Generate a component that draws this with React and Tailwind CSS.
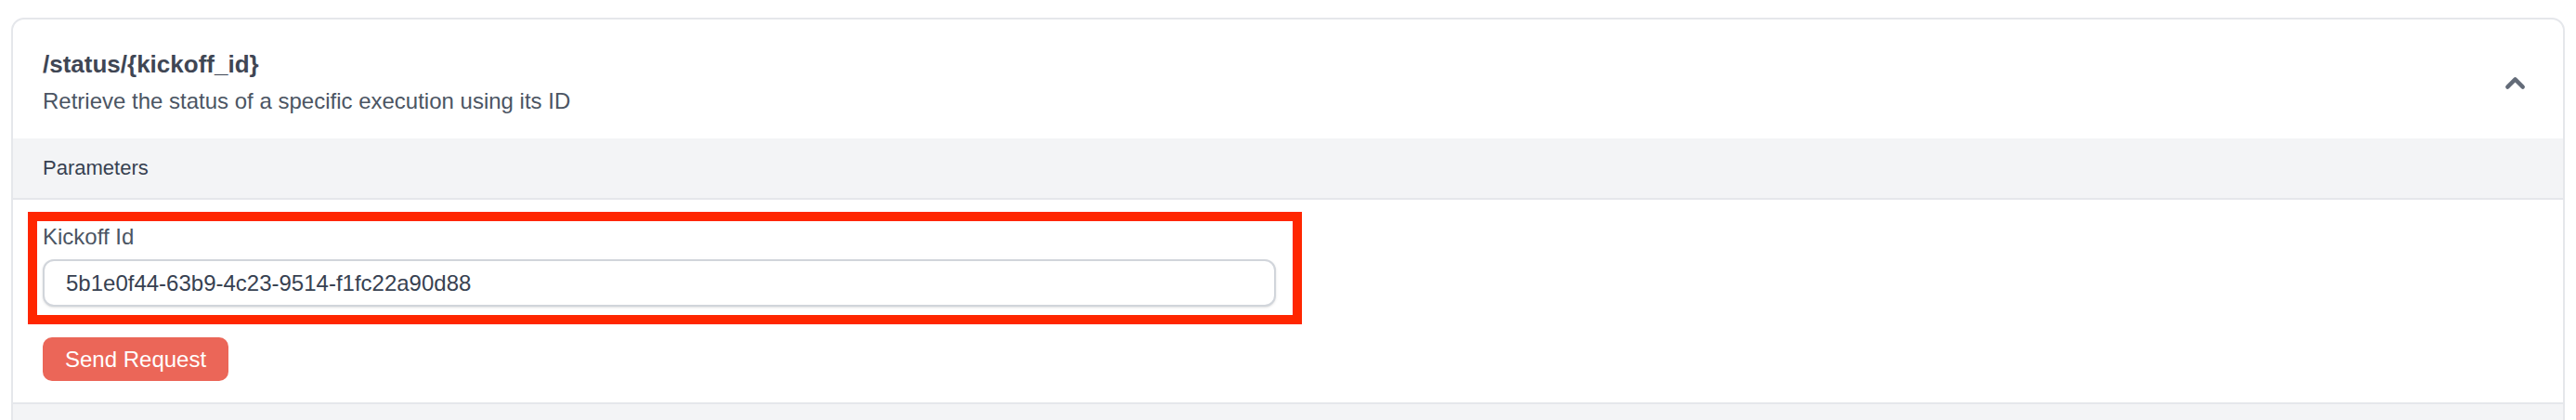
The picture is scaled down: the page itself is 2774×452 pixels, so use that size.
import React, { useState } from 'react';
import { ChevronUp } from 'lucide-react';

const font = { fontFamily: '"Liberation Sans", Arial, sans-serif' };

const App = () => {
  const [kickoffId, setKickoffId] = useState('5b1e0f44-63b9-4c23-9514-f1fc22a90d88');
  const [isOpen, setIsOpen] = useState(true);

  return (
    <div className="min-h-screen bg-white pl-[12px] pr-[12px] pt-[19px]" style={font}>
      <div className="rounded-[14px] border-2 border-[#e5e7eb] bg-white">
        {/* Endpoint header */}
        <button
          onClick={() => setIsOpen(!isOpen)}
          className="flex w-full items-center justify-between pl-[32px] pr-[35px] pt-[28px] pb-[20px] text-left"
        >
          <div>
            <h3 className="text-[26px] leading-[40px] font-bold text-[#3f4654]">/status/{'{kickoff_id}'}</h3>
            <p className="text-[24px] leading-[40px] text-[#4b5563]">Retrieve the status of a specific execution using its ID</p>
          </div>
          <ChevronUp size={33} strokeWidth={3.1} className="text-[#636b78]" />
        </button>

        {/* Parameters band */}
        <div className="h-[66px] border-b-2 border-[#e5e7eb] bg-[#f3f4f6] pl-[32px]">
          <p className="text-[22px] leading-[64px] text-[#374151]">Parameters</p>
        </div>

        <div className="px-[32px] pt-[24px] pb-[23px]">
          <div className="relative w-[1328px]">
            <label className="block text-[24px] leading-[32px] text-[#4b5563]">Kickoff Id</label>
            <input
              value={kickoffId}
              onChange={(e) => setKickoffId(e.target.value)}
              className="mt-[8px] block h-[51px] w-full rounded-[12px] border-2 border-[#d1d5db] bg-white pl-[23px] pr-4 text-[24px] text-[#374151] shadow-sm outline-none"
              style={font}
            />
            {/* highlight annotation */}
            <span className="pointer-events-none absolute -left-[16px] -top-[11px] -right-[28px] -bottom-[19px] border-[10px] border-[#ff2600]"></span>
          </div>

          <button className="mt-[33px] flex h-[47px] items-center rounded-[10px] bg-[#eb6658] px-[24px] text-[24px] text-white">
            Send Request
          </button>
        </div>

        <div className="h-[80px] border-t-2 border-[#e5e7eb] bg-[#f3f4f6]"></div>
      </div>
    </div>
  );
};

export default App;
